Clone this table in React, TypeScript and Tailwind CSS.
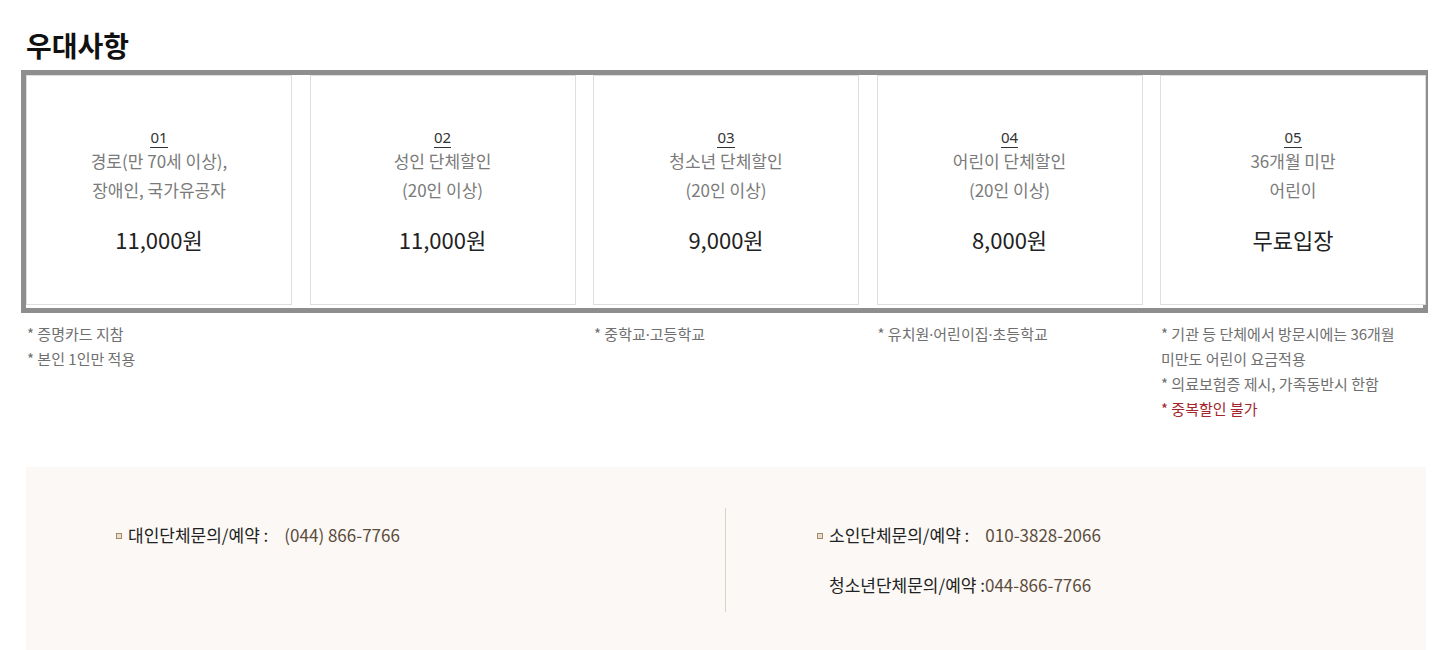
const FONT = "font-['Noto_Sans_CJK_KR','Noto_Sans',sans-serif]";

interface Benefit {
  no: string;
  lines: string[];
  price: string;
  notes: { text: string; red?: boolean }[];
}

const BENEFITS: Benefit[] = [
  {
    no: '01',
    lines: ['경로(만 70세 이상),', '장애인, 국가유공자'],
    price: '11,000원',
    notes: [{ text: '* 증명카드 지참' }, { text: '* 본인 1인만 적용' }],
  },
  { no: '02', lines: ['성인 단체할인', '(20인 이상)'], price: '11,000원', notes: [] },
  {
    no: '03',
    lines: ['청소년 단체할인', '(20인 이상)'],
    price: '9,000원',
    notes: [{ text: '* 중학교·고등학교' }],
  },
  {
    no: '04',
    lines: ['어린이 단체할인', '(20인 이상)'],
    price: '8,000원',
    notes: [{ text: '* 유치원·어린이집·초등학교' }],
  },
  {
    no: '05',
    lines: ['36개월 미만', '어린이'],
    price: '무료입장',
    notes: [
      { text: '* 기관 등 단체에서 방문시에는 36개월 미만도 어린이 요금적용' },
      { text: '* 의료보험증 제시, 가족동반시 한함' },
      { text: '* 중복할인 불가', red: true },
    ],
  },
];

// middle dot in the CJK font is full width; the reference uses a narrow one
function NoteText({ text }: { text: string }) {
  const parts = text.split('·');
  return (
    <>
      {parts.map((p, i) => (
        <span key={i}>
          {i > 0 && <span className="font-['Noto_Sans',sans-serif]">·</span>}
          {p}
        </span>
      ))}
    </>
  );
}

function Bullet() {
  return <span className="inline-block w-[6px] h-[6px] border border-[#a48a6a] bg-[#e9dccb] mr-[6px] mb-[3px]" />;
}

export default function App() {
  return (
    <div className={`${FONT} bg-white w-[1443px] h-[650px] overflow-hidden pl-[26px]`}>
      <h2 className="pt-[25px] h-[70px] text-[28px] leading-[40px] font-bold text-[#111]">우대사항</h2>

      {/* Card row */}
      <div className="w-[1407px] -ml-[5px] border-[5px] border-[#8e8e8e] pb-[3px]">
        <div className="w-[1400px] grid grid-cols-5 gap-[17.5px]">
          {BENEFITS.map(b => (
            <div key={b.no} className="h-[230px] border border-[#dedede] bg-white flex flex-col items-center pt-[51px] text-center">
              <span className="text-[15px] leading-[20px] text-[#333] border-b border-[#333] font-['Noto_Sans',sans-serif]">{b.no}</span>
              <div className="mt-[-2px] text-[17px] leading-[29px] text-[#7a7a7a]">
                {b.lines.map(l => (
                  <div key={l}>{l}</div>
                ))}
              </div>
              <div className="mt-[20px] text-[22px] leading-[30px] text-[#222]">{b.price}</div>
            </div>
          ))}
        </div>
      </div>

      {/* Notes */}
      <div className="w-[1400px] grid grid-cols-5 gap-x-[17.5px] mt-[8px] text-[15px] leading-[25px] text-[#6f6f6f] break-keep">
        {BENEFITS.map(b => (
          <div key={b.no} className="pl-[1px]">
            {b.notes.map(n => (
              <div key={n.text} className={n.red ? 'text-[#a4262c]' : ''}>
                <NoteText text={n.text} />
              </div>
            ))}
          </div>
        ))}
      </div>

      {/* Contact box */}
      <div className="w-[1400px] mt-[46px] bg-[#fbf8f5] pt-[41px] pb-[40px] flex text-[17px]">
        <div className="w-[699px] pl-[90px] pt-[14px]">
          <div className="leading-[26px] text-[#222]">
            <Bullet />
            대인단체문의/예약 :
            <span className="ml-[16px] text-[#5c4c3c]">(044) 866-7766</span>
          </div>
        </div>
        <div className="w-px h-[104px] bg-[#d9d2ca]" />
        <div className="pl-[91px] pt-[14px] flex flex-col gap-[24px]">
          <div className="leading-[26px] text-[#222]">
            <Bullet />
            소인단체문의/예약 :
            <span className="ml-[16px] text-[#5c4c3c]">010-3828-2066</span>
          </div>
          <div className="leading-[26px] text-[#222] pl-[12px]">
            청소년단체문의/예약 :<span className="text-[#5c4c3c]">044-866-7766</span>
          </div>
        </div>
      </div>
    </div>
  );
}
